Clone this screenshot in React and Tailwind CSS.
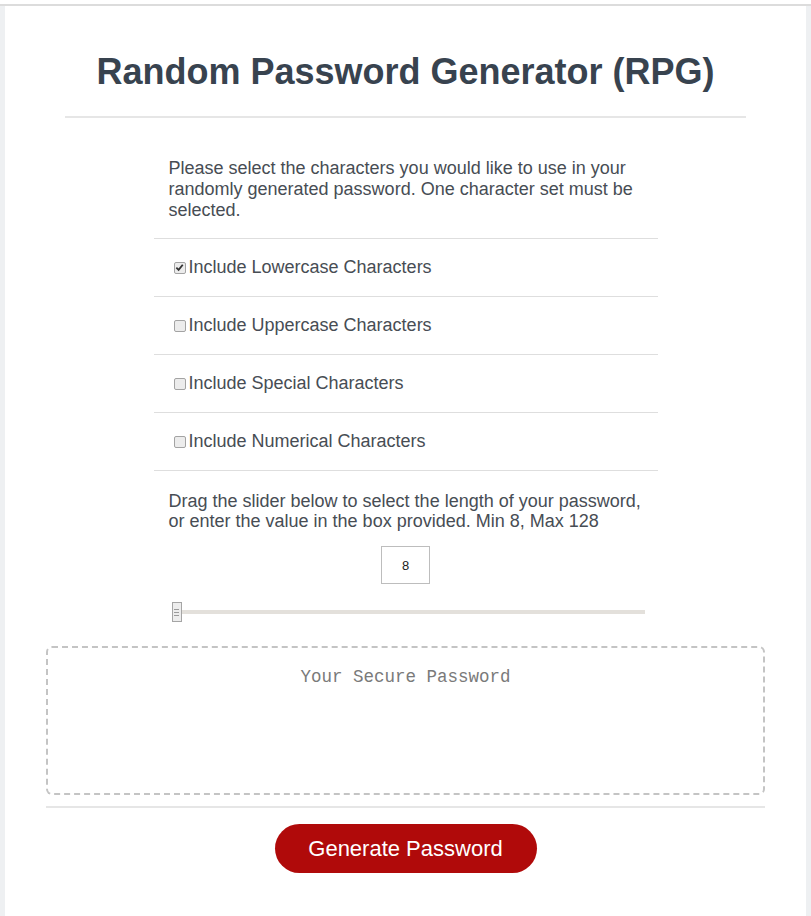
import React, { useState } from 'react';

const options = [
  { key: 'lower', label: 'Include Lowercase Characters' },
  { key: 'upper', label: 'Include Uppercase Characters' },
  { key: 'special', label: 'Include Special Characters' },
  { key: 'numeric', label: 'Include Numerical Characters' },
];

const Checkbox = ({ checked, onChange }) => (
  <button
    type="button"
    onClick={onChange}
    className="w-[12px] h-[12px] rounded-[2px] border border-[#a3a3a3] bg-[#ececec] flex items-center justify-center shrink-0"
  >
    {checked && (
      <svg width="9" height="9" viewBox="0 0 10 10">
        <path d="M1.5 5.2 L4 7.6 L8.6 2" fill="none" stroke="#333" strokeWidth="2" />
      </svg>
    )}
  </button>
);

export default function App() {
  const [sets, setSets] = useState({ lower: true, upper: false, special: false, numeric: false });
  const [length, setLength] = useState(8);

  const toggle = (key) => setSets((s) => ({ ...s, [key]: !s[key] }));
  const pct = ((length - 8) / 120) * 100;

  return (
    <div className="min-h-[916px] bg-white pt-[4px] font-['Liberation_Sans',Arial,sans-serif]">
      <div className="min-h-[912px] border-t-2 border-[#dcdcdc] bg-[#eef0f2] px-[5px] flex">
        <div className="flex-1 bg-white pt-[46px] pb-10">
          <h1 className="text-center text-[36px] leading-[40px] font-bold text-[#38434f]">
            Random Password Generator (RPG)
          </h1>
          <div className="mx-[60px] mt-[24px] h-[2px] bg-[#e6e6e6]" />

          <div className="w-[504px] mx-auto mt-[22px] text-[18px] leading-[21px] text-[#474d54]">
            <p className="px-[15px] pt-[18px] pb-[17px] border-b border-[#dedede]">
              Please select the characters you would like to use in your randomly generated password. One character set must be selected.
            </p>
            {options.map((o) => (
              <label
                key={o.key}
                className="h-[58px] pl-[20px] flex items-center gap-[3px] border-b border-[#dedede] cursor-pointer"
              >
                <Checkbox checked={sets[o.key]} onChange={() => toggle(o.key)} />
                <span>{o.label}</span>
              </label>
            ))}
            <p className="px-[15px] pt-[20px] leading-[20px]">
              Drag the slider below to select the length of your password, or enter the value in the box provided. Min 8, Max 128
            </p>
            <div className="flex justify-center mt-[15px]">
              <input
                value={length}
                onChange={(e) => setLength(Number(e.target.value) || 8)}
                className="w-[49px] h-[38px] border border-[#bdbdbd] text-center text-[13px] text-[#222] outline-none"
              />
            </div>
            <div className="relative mt-[18px] ml-[18px] mr-[13px] h-[20px] flex items-center">
              <div className="w-full h-[4px] bg-[#e3e0db]" />
              <div
                className="absolute top-0 w-[10px] h-[20px] border border-[#a5a5a5] bg-[#ededed] flex flex-col items-center justify-center gap-[2px]"
                style={{ left: `calc(${pct}% - ${pct / 10}px)` }}
              >
                <span className="w-[5px] h-px bg-[#9a9a9a]" />
                <span className="w-[5px] h-px bg-[#9a9a9a]" />
                <span className="w-[5px] h-px bg-[#9a9a9a]" />
              </div>
            </div>
          </div>

          <div className="mx-[41px] mt-[24px] h-[149px] border-2 border-dashed border-[#c4c4c4] rounded-[6px] pt-[16px] text-center font-['Liberation_Mono',monospace] text-[17.5px] text-[#7a7a7a]">
            Your Secure Password
          </div>
          <div className="mx-[41px] mt-[11px] h-[2px] bg-[#e6e6e6]" />

          <div className="flex justify-center mt-[16px]">
            <button className="w-[262px] h-[49px] rounded-full bg-[#b00a0a] text-white text-[22px]">
              Generate Password
            </button>
          </div>
        </div>
      </div>
    </div>
  );
}
